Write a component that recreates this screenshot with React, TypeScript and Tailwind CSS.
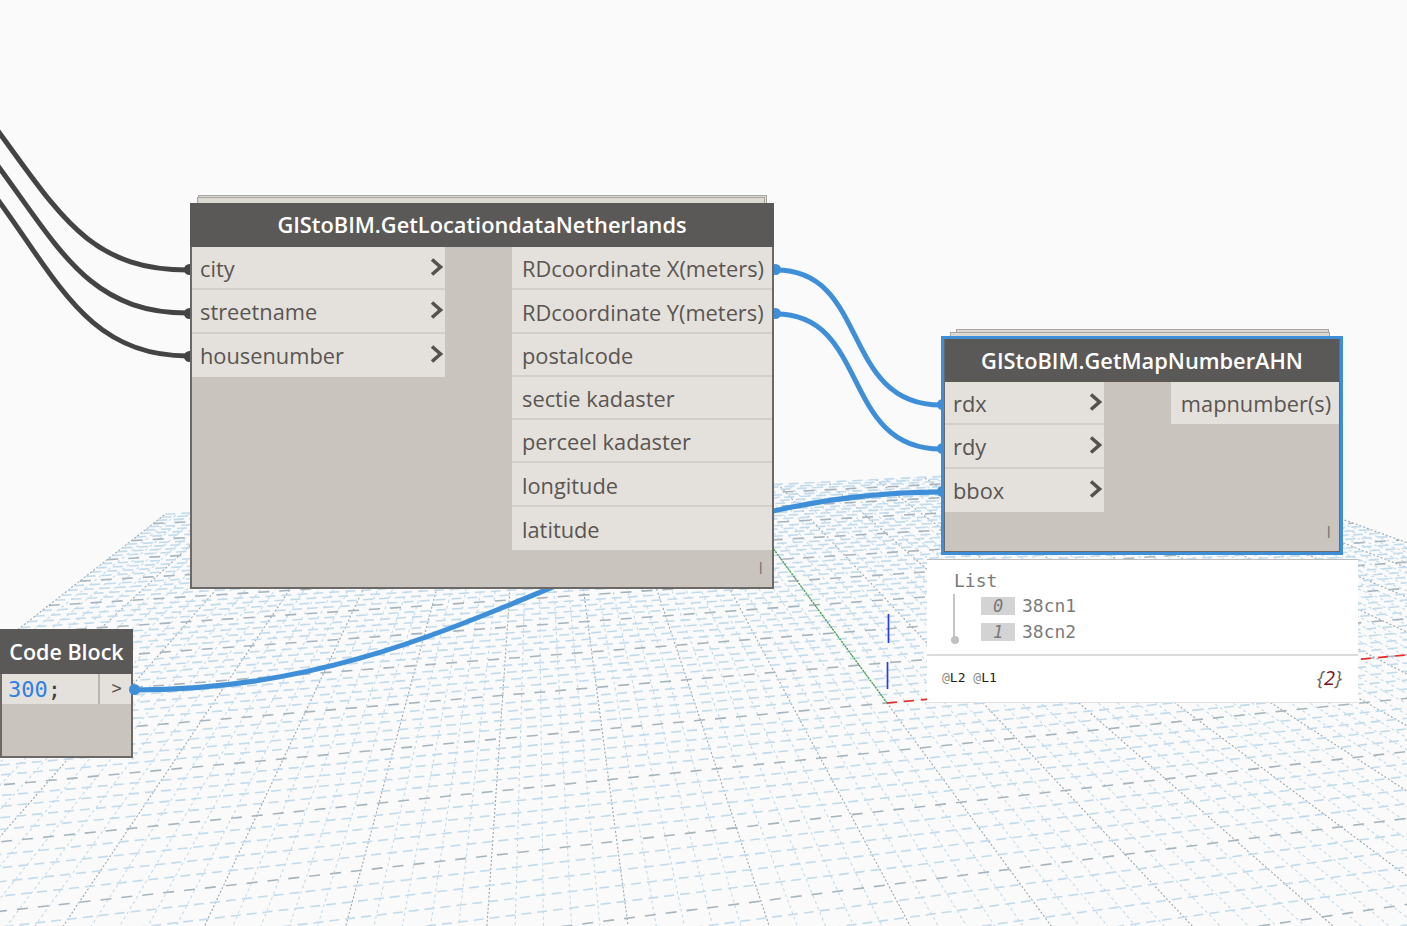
import React from "react";

const V1 = [535, 225];
const V2 = [6000, 230];
const O = [887, 703];
const US = 0.0172;
const VS = 0.00352;
const P = (i: number, j: number) => {
  const u = i * US;
  const v = j * VS;
  const d = 1 + u + v;
  return [(O[0] + u * V1[0] + v * V2[0]) / d, (O[1] + u * V1[1] + v * V2[1]) / d];
};
const seg = (a: number[], b: number[]) =>
  `M${a[0].toFixed(1)} ${a[1].toFixed(1)}L${b[0].toFixed(1)} ${b[1].toFixed(1)}`;

function Grid() {
  const iMin = -36;
  const iMax = 48;
  const rows: React.ReactNode[] = [];
  for (let j = -50; j <= 50; j++) {
    const major = j % 5 === 0;
    rows.push(
      <path
        key={"c" + j}
        d={seg(P(iMin, j), P(iMax, j))}
        stroke={major ? "#9aa6af" : "#c2dbea"}
        strokeWidth={1.1}
        strokeDasharray={major ? "2 2" : "3 3"}
        fill="none"
      />,
    );
  }
  for (let i = iMin; i <= iMax; i++) {
    const major = i % 5 === 0;
    rows.push(
      <path
        key={"r" + i}
        d={seg(P(i, -50), P(i, 50))}
        stroke={major ? "#a6b4bd" : "#c2dbeb"}
        strokeWidth={1.6}
        strokeDasharray={major ? "11 10" : "10 6"}
        fill="none"
      />,
    );
  }
  return (
    <svg className="absolute inset-0" width={1407} height={926}>
      {rows}
      <path d={seg(O, P(48, 0))} stroke="#4aa356" strokeWidth={1.3} strokeDasharray="2 1" fill="none" />
      <path d={seg(O, P(0, 50))} stroke="#f02a2a" strokeWidth={1.6} strokeDasharray="10 7" fill="none" />
      <path d="M888.5 614V643M887.5 662V689" stroke="#2a3ae6" strokeWidth={1.7} fill="none" />
    </svg>
  );
}

function Wires() {
  return (
    <svg className="absolute inset-0" width={1407} height={926} fill="none">
      <g stroke="#444444" strokeWidth={5}>
        <path d="M-2 131C60 215 90 270 188 270" />
        <path d="M-2 166C60 250 90 313 188 313" />
        <path d="M-2 200C60 285 90 356 188 356" />
      </g>
      <g stroke="#3f8fd8" strokeWidth={5}>
        <path d="M776 270C870 270 840 405 941 405" />
        <path d="M776 314C870 314 840 449 941 449" />
        <path d="M135 690C470 690 620 492 941 492" />
      </g>
    </svg>
  );
}

function Chevron() {
  return (
    <svg width={14} height={20} viewBox="0 0 14 20" fill="none" className="mt-[-2px] shrink-0">
      <path d="M2 2.5L10.5 10L2 17.5" stroke="#57514d" strokeWidth={3.6} />
    </svg>
  );
}

function InRow({ label, last }: { label: string; last?: boolean }) {
  return (
    <div className={`flex h-[43.3px] items-center justify-between bg-[#e4e1dc] pl-[8px] pr-[1px] ${last ? "" : "border-b-2 border-[#d2cec8]"}`}>
      <span className="pt-[2px]">{label}</span>
      <Chevron />
    </div>
  );
}

function OutRow({ label, last }: { label: string; last?: boolean }) {
  return (
    <div className={`flex h-[43.3px] items-center whitespace-nowrap bg-[#e4e1dc] pl-[10px] ${last ? "pt-[2px]" : "border-b-2 border-[#d2cec8] pt-[3px]"}`}>
      {label}
    </div>
  );
}

function Dot({ className }: { className: string }) {
  return <div className={`absolute h-[11px] w-[11px] rounded-full ${className}`} />;
}

const font = "font-['Open_Sans',sans-serif]";

function StackTop({ className }: { className: string }) {
  return <div className={`absolute border border-b-0 border-[#a9a6a1] bg-[#dcd9d3] ${className}`} />;
}

function Node1() {
  const inputs = ["city", "streetname", "housenumber"];
  const outputs = [
    "RDcoordinate X(meters)",
    "RDcoordinate Y(meters)",
    "postalcode",
    "sectie kadaster",
    "perceel kadaster",
    "longitude",
    "latitude",
  ];
  return (
    <div className="absolute left-[190px] top-[195px] w-[584px]">
      <StackTop className="left-[8px] top-0 h-[8px] w-[569px]" />
      <StackTop className="left-[7px] top-[2px] h-[6px] w-[568px]" />
      <Dot className="left-[-6px] top-[69px] bg-[#444444]" />
      <Dot className="left-[-6px] top-[113px] bg-[#444444]" />
      <Dot className="left-[-6px] top-[156px] bg-[#444444]" />
      <Dot className="right-[-7px] top-[69px] bg-[#3f8fd8]" />
      <Dot className="right-[-7px] top-[113px] bg-[#3f8fd8]" />
      <div className={`relative mt-[8px] flex h-[386px] flex-col border-2 border-t-0 border-[#6b6865] bg-[#c9c5be] text-[21.8px] leading-none text-[#5a5552] ${font}`}>
        <div className="mx-[-2px] flex h-[44px] items-center justify-center bg-[#5b5957] font-semibold text-white">
          GIStoBIM.GetLocationdataNetherlands
        </div>
        <div className="flex justify-between">
          <div className="w-[253px]">
            {inputs.map((l, i) => (
              <InRow key={l} label={l} last={i === inputs.length - 1} />
            ))}
          </div>
          <div className="w-[260px]">
            {outputs.map((l, i) => (
              <OutRow key={l} label={l} last={i === outputs.length - 1} />
            ))}
          </div>
        </div>
        <div className="mt-auto flex justify-end pb-[11px] pr-[9px] text-[16px] text-[#7a7672]">I</div>
      </div>
    </div>
  );
}

function Node2() {
  return (
    <div className="absolute left-[941px] top-[329px] w-[402px]">
      <StackTop className="left-[15px] top-0 h-[8px] w-[373px]" />
      <StackTop className="left-[9px] top-[3px] h-[5px] w-[380px]" />
      <Dot className="left-[-4px] top-[70px] bg-[#3f8fd8]" />
      <Dot className="left-[-4px] top-[114px] bg-[#3f8fd8]" />
      <Dot className="left-[-4px] top-[157px] bg-[#3f8fd8]" />
      <div className="relative mt-[7px] h-[219px] border-[3px] border-[#3f8fd8]">
        <div className={`flex h-full flex-col border border-t-0 border-[#6b6865] bg-[#c9c5be] text-[21.8px] leading-none text-[#5a5552] ${font}`}>
          <div className="flex h-[43px] items-center justify-center bg-[#5b5957] font-semibold text-white">
            GIStoBIM.GetMapNumberAHN
          </div>
          <div className="flex justify-between">
            <div className="w-[159px]">
              <InRow label="rdx" />
              <InRow label="rdy" />
              <InRow label="bbox" last />
            </div>
            <div className="flex h-[42px] w-[168px] items-center justify-center bg-[#e4e1dc] pl-[2px] pt-[2px]">mapnumber(s)</div>
          </div>
          <div className="mt-auto flex justify-end pb-[11px] pr-[8px] text-[16px] text-[#7a7672]">I</div>
        </div>
      </div>
    </div>
  );
}

function CodeBlock() {
  return (
    <div className={`absolute left-0 top-[629px] flex h-[129px] w-[133px] flex-col border-2 border-t-0 border-[#6b6865] bg-[#c9c5be] ${font}`}>
      <div className="mx-[-2px] flex h-[45px] items-center justify-center bg-[#5b5957] pt-[2px] text-[21.5px] font-semibold text-white">
        Code Block
      </div>
      <div className="flex h-[30px]">
        <div className="flex w-[98px] items-center border-r-2 border-[#b9b5af] bg-[#e4e1dc] pl-[6px] pt-[2px] font-['DejaVu_Sans_Mono',monospace] text-[22px] leading-none text-[#3c3c3c]">
          <span className="text-[#2f80e0]">300</span>;
        </div>
        <div className="flex flex-1 items-center justify-center bg-[#e4e1dc] pl-[2px] font-['DejaVu_Sans_Mono',monospace] text-[17px] text-[#5a5552]">
          &gt;
        </div>
      </div>
      <Dot className="left-[127px] top-[55px] bg-[#3f8fd8]" />
    </div>
  );
}

function Watch() {
  const mono = "font-['DejaVu_Sans_Mono',monospace]";
  return (
    <div className="absolute left-[927px] top-[559px] flex h-[144px] w-[431px] flex-col border-t border-b border-t-[#bdbdbd] border-b-[#e2e2e2] bg-white">
      <div className={`relative h-[96px] border-b-2 border-[#dcdcdc] pl-[27px] pt-[10px] text-[18px] leading-[22px] text-[#7a7a7a] ${mono}`}>
        <div className="h-[22px]">List</div>
        <div className="absolute left-[26px] top-[34px] h-[48px] w-[2px] bg-[#c4c4c4]" />
        <div className="absolute left-[24px] top-[76px] h-[8px] w-[8px] rounded-full bg-[#c0c0c0]" />
        <div className="mt-[5px] flex h-[18px] items-center pl-[27px]">
          <span className="mr-[7px] flex h-[18px] w-[34px] items-center justify-center bg-[#d3d3d3] text-[17px] italic">0</span>
          38cn1
        </div>
        <div className="mt-[8px] flex h-[18px] items-center pl-[27px]">
          <span className="mr-[7px] flex h-[18px] w-[34px] items-center justify-center bg-[#d3d3d3] text-[17px] italic">1</span>
          38cn2
        </div>
      </div>
      <div className="flex flex-1 items-center justify-between pb-[2px] pl-[15px] pr-[16px]">
        <span className={`text-[13px] text-[#222222] ${mono}`}>
          <span className="text-[#8a8a8a]">@</span>L2 <span className="text-[#8a8a8a]">@</span>L1
        </span>
        <span className="font-['Open_Sans',sans-serif] text-[20px] italic text-[#7a1020]">
          <span className="text-[#666666]">{"{"}</span>2<span className="text-[#666666]">{"}"}</span>
        </span>
      </div>
    </div>
  );
}

export default function App() {
  return (
    <div className="relative h-[926px] w-[1407px] overflow-hidden bg-[#fafafa]">
      <Grid />
      <Wires />
      <Node1 />
      <Node2 />
      <CodeBlock />
      <Watch />
    </div>
  );
}
